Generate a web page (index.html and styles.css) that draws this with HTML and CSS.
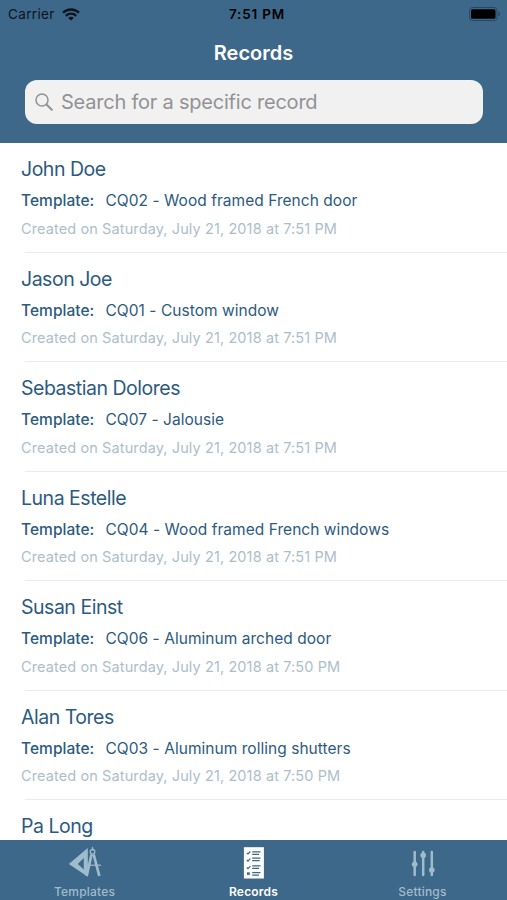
FILE: index.html
```html
<!DOCTYPE html>
<html lang="en">
<head>
    <meta charset="UTF-8">
    <meta name="viewport" content="width=device-width, initial-scale=1.0">
    <title>Records</title>
    <link rel="stylesheet" href="styles.css">
</head>
<body>
<header class="header">
    <div class="status-bar">
        <div class="carrier">
            <span>Carrier</span>
            <svg class="wifi" viewBox="0 0 18 13" fill="none" stroke="currentColor" stroke-width="2.3">
                <path d="M1 4.8C5.4.4 12.6.4 17 4.8"></path>
                <path d="M3.8 7.8c2.9-2.8 7.5-2.8 10.4 0"></path>
                <path d="M9 12.6 6.2 9.9c1.6-1.5 4-1.5 5.6 0z" fill="currentColor" stroke="none"></path>
            </svg>
        </div>
        <span class="time">7:51 PM</span>
        <svg class="battery" viewBox="0 0 32 14">
            <rect x=".5" y=".5" width="27.5" height="13" rx="3" fill="none" stroke="#284860"></rect>
            <rect x="2" y="2.2" width="24.5" height="9.6" rx="1.5" fill="#000"></rect>
            <path d="M29.5 4.8c2 .6 2 3.8 0 4.4z" fill="#284860"></path>
        </svg>
    </div>
    <h1>Records</h1>
    <div class="search">
        <svg class="search-icon" viewBox="0 0 18 18" fill="none" stroke="currentColor" stroke-width="1.5" stroke-linecap="round">
            <circle cx="7" cy="7" r="6"></circle>
            <path d="M11.5 11.5l5.3 5.3" stroke-width="2"></path>
        </svg>
        <span>Search for a specific record</span>
    </div>
</header>

<main class="records">
    <article class="record">
        <h2>John Doe</h2>
        <p class="template"><b>Template:</b><span>CQ02 - Wood framed French door</span></p>
        <p class="created">Created on Saturday, July 21, 2018 at 7:51 PM</p>
    </article>
    <article class="record">
        <h2>Jason Joe</h2>
        <p class="template"><b>Template:</b><span>CQ01 - Custom window</span></p>
        <p class="created">Created on Saturday, July 21, 2018 at 7:51 PM</p>
    </article>
    <article class="record">
        <h2>Sebastian Dolores</h2>
        <p class="template"><b>Template:</b><span>CQ07 - Jalousie</span></p>
        <p class="created">Created on Saturday, July 21, 2018 at 7:51 PM</p>
    </article>
    <article class="record">
        <h2>Luna Estelle</h2>
        <p class="template"><b>Template:</b><span>CQ04 - Wood framed French windows</span></p>
        <p class="created">Created on Saturday, July 21, 2018 at 7:51 PM</p>
    </article>
    <article class="record">
        <h2>Susan Einst</h2>
        <p class="template"><b>Template:</b><span>CQ06 - Aluminum arched door</span></p>
        <p class="created">Created on Saturday, July 21, 2018 at 7:50 PM</p>
    </article>
    <article class="record">
        <h2>Alan Tores</h2>
        <p class="template"><b>Template:</b><span>CQ03 - Aluminum rolling shutters</span></p>
        <p class="created">Created on Saturday, July 21, 2018 at 7:50 PM</p>
    </article>
    <article class="record">
        <h2>Pa Long</h2>
    </article>
</main>

<nav class="tab-bar">
    <a class="tab">
        <!-- set square and compass -->
        <svg viewBox="0 0 34 34" fill="none" stroke="currentColor">
            <path d="M19.8 2v28.8L.8 18zM15.8 12v11.5L9.8 18z" fill="currentColor" fill-rule="evenodd" stroke="none"></path>
            <circle cx="24.5" cy="5.8" r="2.3" stroke-width="1.3"></circle>
            <path d="M24.5 1v2.5" stroke-width="1.3"></path>
            <path d="M23.5 8.5 18.7 30M25.7 8.5 31.3 30" stroke-width="2.7"></path>
            <path d="M16 19.2h17" stroke-width="1.2"></path>
        </svg>
        <span>Templates</span>
    </a>
    <a class="tab active">
        <!-- checklist -->
        <svg viewBox="0 0 34 34" fill="none">
            <rect x="6.9" y="1.2" width="20" height="31.3" fill="currentColor"></rect>
            <g class="ink">
                <path d="M9.8 6.8l1.2 1.2 2.3-2.5M9.8 14l1.2 1.2 2.3-2.5M9.8 21.5l1.2 1.2 2.3-2.5" stroke-width="1.2"></path>
                <path d="M10 27.6h2.8" stroke-width="2.6"></path>
                <path d="M15.2 5.8h8.3M15.2 8.3H22M15.2 12.2h8.3M15.2 14.7h7.5M15.2 19.9h8.3M15.2 22.4H22M15.2 26.7h8.3M15.2 29.2H22" stroke-width="1.3"></path>
            </g>
        </svg>
        <span>Records</span>
    </a>
    <a class="tab">
        <!-- sliders -->
        <svg viewBox="0 0 34 34" fill="currentColor" stroke="currentColor" stroke-width="2.5" stroke-linecap="round">
            <path d="M8.7 6v23M17.2 6v23M25.8 6v23"></path>
            <g stroke="none">
                <circle cx="8.7" cy="18.3" r="2.8"></circle>
                <circle cx="17.2" cy="9.3" r="2.8"></circle>
                <circle cx="25.8" cy="24" r="2.8"></circle>
            </g>
        </svg>
        <span>Settings</span>
    </a>
</nav>
</body>
</html>
```
FILE: styles.css
```css
:root {
    --primary: #3d6889;
    --text-main: #2c5a80;
    --text-light: #adbec9;
    --separator: #e9ebec;
    --search-bg: #f1f1f1;
    --tab-inactive: #9fbccd;
}

* {
    margin: 0;
    padding: 0;
    box-sizing: border-box;
}

body {
    height: 100vh;
    display: flex;
    flex-direction: column;
    overflow: hidden;
    background-color: #fff;
    font-family: Inter, "Liberation Sans", sans-serif;
}

.header {
    flex: none;
    height: 142.5px;
    background-color: var(--primary);
}

.status-bar {
    height: 27px;
    padding: 0 6px 0 8px;
    display: grid;
    grid-template-columns: 1fr auto 1fr;
    align-items: center;
    color: #0b141b;
    font-size: 13.5px;
    line-height: 27px;
}

.carrier {
    display: flex;
    align-items: center;
    gap: 7px;
    letter-spacing: 0.35px;
}

.carrier span,
.time {
    padding-top: 1px;
}

.wifi {
    width: 18px;
    height: 13px;
}

.time {
    padding-left: 5px;
    color: #000;
    font-weight: 600;
    letter-spacing: 0.8px;
}

.battery {
    width: 32px;
    height: 14px;
    justify-self: end;
}

h1 {
    height: 53px;
    color: #fff;
    font-size: 20px;
    font-weight: 600;
    line-height: 52px;
    text-align: center;
}

.search {
    height: 44px;
    margin: 0 24.5px 0 25px;
    padding-left: 10px;
    display: flex;
    align-items: center;
    gap: 8px;
    border-radius: 12px;
    background-color: var(--search-bg);
    color: #929294;
    font-size: 20px;
    letter-spacing: -0.22px;
}

.search-icon {
    width: 18px;
    height: 18px;
}

.records {
    flex: 1;
    min-height: 0;
    padding-top: 0.5px;
    overflow: hidden;
}

.record {
    height: 109.5px;
    padding: 13px 0 0 21px;
    background: linear-gradient(var(--separator), var(--separator)) 25px 100% / 100% 1px no-repeat;
}

h2 {
    color: var(--text-main);
    font-size: 19.5px;
    font-weight: 400;
    letter-spacing: -0.48px;
    line-height: 26px;
}

.template {
    margin-top: 8px;
    display: flex;
    gap: 10px;
    color: var(--text-main);
    font-size: 15.5px;
    letter-spacing: 0.04px;
    line-height: 22px;
}

.template b {
    width: 74.5px;
    font-weight: 550;
}

.created {
    margin-top: 6.5px;
    color: var(--text-light);
    font-size: 14.5px;
    letter-spacing: 0.11px;
    line-height: 20px;
}

.tab-bar {
    flex: none;
    height: 60px;
    display: grid;
    grid-template-columns: repeat(3, 1fr);
    background-color: var(--primary);
}

.tab {
    padding-top: 6px;
    display: flex;
    flex-direction: column;
    align-items: center;
    gap: 4px;
    color: var(--tab-inactive);
    font-size: 12px;
    font-weight: 500;
    letter-spacing: 0.2px;
    line-height: 16px;
}

.tab svg {
    width: 34px;
    height: 34px;
}

.tab.active {
    color: #fff;
    font-weight: 600;
}

.ink {
    stroke: var(--primary);
}
```
